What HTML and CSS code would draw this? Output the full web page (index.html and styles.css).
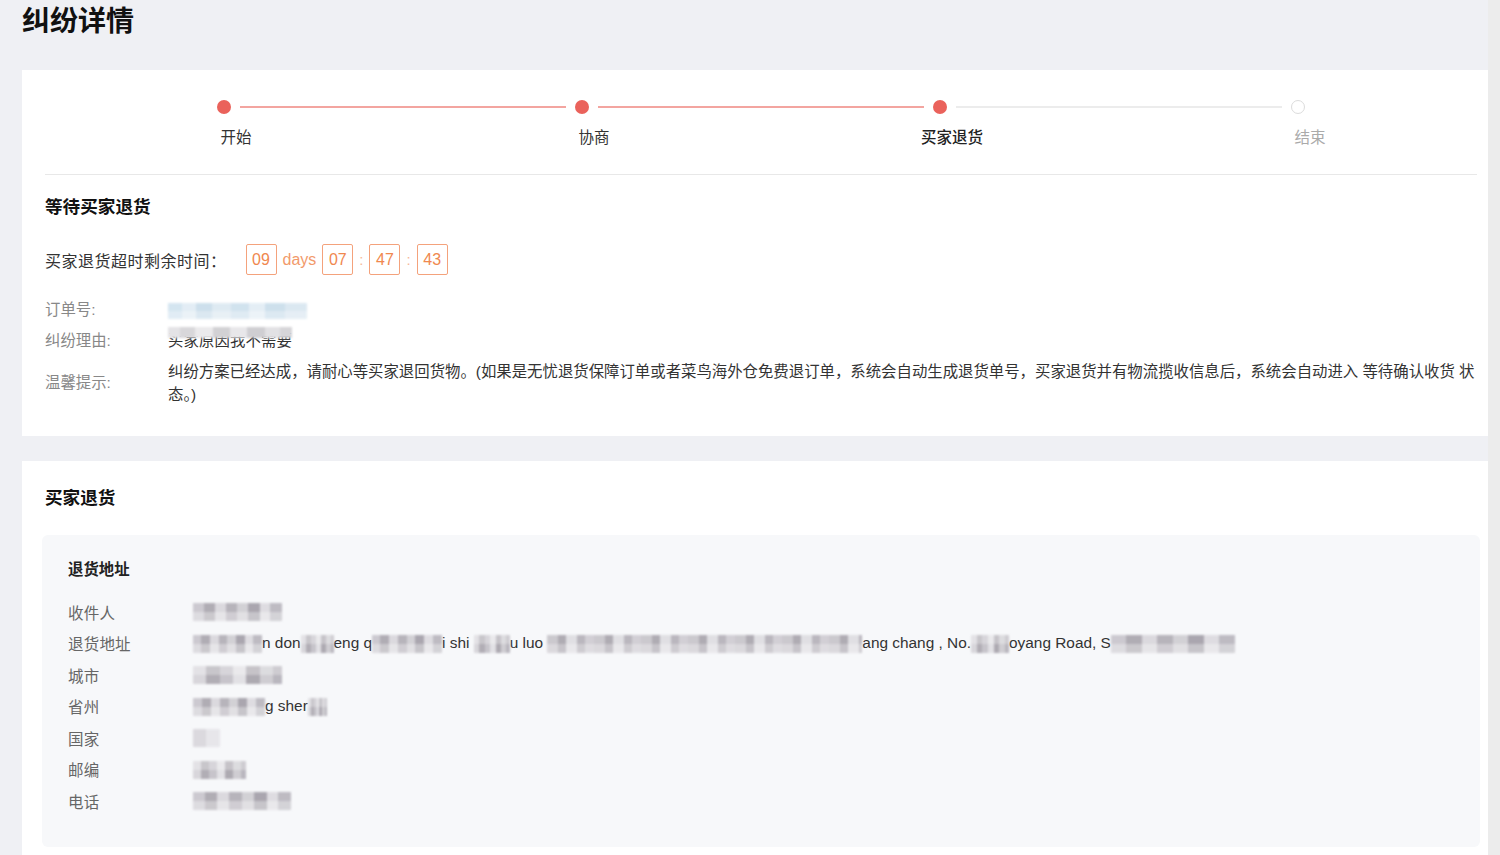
FILE: index.html
```html
<!DOCTYPE html>
<html lang="zh-CN">
<head>
    <meta charset="UTF-8">
    <meta name="viewport" content="width=device-width, initial-scale=1.0">
    <title>纠纷详情</title>
    <link rel="stylesheet" href="styles.css">
</head>
<body>

    <div class="page">
        <h1 class="page-title">纠纷详情</h1>

        <!-- progress + status -->
        <div class="card card-progress">
            <div class="steps-track">
                <span class="dot"></span><span class="line done"></span>
                <span class="dot"></span><span class="line done"></span>
                <span class="dot"></span><span class="line"></span>
                <span class="dot todo"></span>
            </div>
            <div class="steps-labels">
                <div class="step-label">开始</div>
                <div class="step-label">协商</div>
                <div class="step-label current">买家退货</div>
                <div class="step-label todo">结束</div>
            </div>
            <div class="divider"></div>

            <h2 class="section-title">等待买家退货</h2>
            <div class="countdown">
                <span class="countdown-label">买家退货超时剩余时间：</span>
                <span class="time-box">09</span>
                <span class="time-unit">days</span>
                <span class="time-box">07</span>
                <span class="time-sep">:</span>
                <span class="time-box">47</span>
                <span class="time-sep">:</span>
                <span class="time-box">43</span>
            </div>

            <div class="info-list">
                <div class="info-row">
                    <div class="info-label">订单号:</div>
                    <div class="info-value"><span class="mosaic blue" style="width:139px"></span></div>
                </div>
                <div class="info-row">
                    <div class="info-label">纠纷理由:</div>
                    <div class="info-value">
                        <span class="reason">买家原因我不需要<span class="mosaic cover" style="width:124px"></span></span>
                    </div>
                </div>
                <div class="info-row tip">
                    <div class="info-label">温馨提示:</div>
                    <div class="info-value">纠纷方案已经达成，请耐心等买家退回货物。(如果是无忧退货保障订单或者菜鸟海外仓免费退订单，系统会自动生成退货单号，买家退货并有物流揽收信息后，系统会自动进入 等待确认收货 状态。)</div>
                </div>
            </div>
        </div>

        <!-- return address -->
        <div class="card card-return">
            <h2 class="section-title">买家退货</h2>
            <div class="address-box">
                <h3 class="address-title">退货地址</h3>
                <div class="address-list">
                    <div class="address-row">
                        <span class="address-label">收件人</span>
                        <span class="address-value"><span class="mosaic" style="width:89px"></span></span>
                    </div>
                    <div class="address-row">
                        <span class="address-label">退货地址</span>
                        <span class="address-value"><span class="mosaic" style="width:69px"></span>n don<span class="mosaic alt" style="width:33px"></span>eng q<span class="mosaic" style="width:70px"></span>i shi <span class="mosaic alt" style="width:36px"></span>u luo <span class="mosaic wide" style="width:315px"></span>ang chang , No.<span class="mosaic alt" style="width:38px"></span>oyang Road, S<span class="mosaic" style="width:124px"></span></span>
                    </div>
                    <div class="address-row">
                        <span class="address-label">城市</span>
                        <span class="address-value"><span class="mosaic alt" style="width:89px"></span></span>
                    </div>
                    <div class="address-row">
                        <span class="address-label">省州</span>
                        <span class="address-value"><span class="mosaic" style="width:72px"></span>g sher<span class="mosaic alt" style="width:19px"></span></span>
                    </div>
                    <div class="address-row">
                        <span class="address-label">国家</span>
                        <span class="address-value"><span class="mosaic light" style="width:27px"></span></span>
                    </div>
                    <div class="address-row">
                        <span class="address-label">邮编</span>
                        <span class="address-value"><span class="mosaic alt" style="width:53px"></span></span>
                    </div>
                    <div class="address-row">
                        <span class="address-label">电话</span>
                        <span class="address-value"><span class="mosaic" style="width:98px"></span></span>
                    </div>
                </div>
            </div>
        </div>
    </div>

    <div class="scrollbar"></div>

</body>
</html>
```

FILE: styles.css
```css
body {
    margin: 0;
    font-family: "Liberation Sans", "Noto Sans CJK SC", sans-serif;
    background: #eff0f4;
    color: #333;
    overflow: hidden;
}

.page {
    padding-left: 22px;
}

.page-title {
    margin: 0;
    padding-top: 2px;
    font-size: 28px;
    line-height: 40px;
    font-weight: 700;
    color: #111;
}

.card {
    background-color: #fff;
    margin-top: 28px;
}

.card-progress {
    padding: 30px 23px 30px 23px;
}

/* Steps */
.steps-track {
    display: flex;
    align-items: center;
    padding: 0 172px;
    height: 14px;
}
.dot {
    flex: none;
    width: 14px;
    height: 14px;
    border-radius: 50%;
    background-color: #ea625b;
    box-sizing: border-box;
}
.dot.todo {
    background-color: #fff;
    border: 1.5px solid #dcdcdc;
}
.line {
    flex: 1;
    height: 2px;
    margin: 0 9px;
    background-color: #ececec;
}
.line.done {
    background-color: #f3a5a0;
}
.steps-labels {
    display: grid;
    grid-template-columns: repeat(4, 1fr);
    margin-top: 13px;
}
.step-label {
    padding-left: 24px;
    text-align: center;
    font-size: 15.5px;
    line-height: 22px;
    color: #333;
}
.step-label.current {
    color: #222;
    font-weight: 500;
}
.step-label.todo {
    color: #aaa;
}
.divider {
    height: 1px;
    background-color: #e8e8e8;
    margin-top: 25px;
}

.section-title {
    margin: 19px 0 0;
    font-size: 17.6px;
    line-height: 26px;
    font-weight: 700;
    color: #111;
}

/* Countdown */
.countdown {
    display: flex;
    align-items: center;
    height: 31px;
    margin-top: 24px;
}
.countdown-label {
    font-size: 16px;
    letter-spacing: 0.5px;
    margin-right: 19px;
    color: #333;
}
.time-box {
    width: 31px;
    height: 31px;
    box-sizing: border-box;
    border: 1px solid #f4a27c;
    border-radius: 2px;
    color: #f0884f;
    font-size: 16px;
    display: flex;
    align-items: center;
    justify-content: center;
}
.time-unit {
    margin: 0 6px;
    font-size: 16px;
    color: #f29a6b;
}
.time-sep {
    margin: 0 6px;
    font-size: 15px;
    color: #f6b99a;
}

/* Info rows */
.info-list {
    margin-top: 24px;
}
.info-row {
    display: flex;
    align-items: center;
    line-height: 22px;
    margin-top: 9px;
    font-size: 15.4px;
}
.info-row:first-child {
    margin-top: 0;
}
.info-row.tip {
    margin-top: 8px;
}
.info-label {
    flex: none;
    width: 123px;
    color: #888;
}
.info-value {
    flex: 1;
    color: #333;
}
.info-row.tip .info-value {
    line-height: 23px;
}
.reason {
    position: relative;
    display: inline-block;
    letter-spacing: 0.1px;
}
.reason .mosaic.cover {
    position: absolute;
    left: 0;
    top: -3px;
    height: 11px;
    opacity: 1;
    background: linear-gradient(90deg, #e4e3e6 0 10%, #d8d7da 10% 22%, #ebeaec 22% 36%, #d2d1d4 36% 50%, #e8e7ea 50% 64%, #cfced2 64% 78%, #e2e1e4 78% 90%, #d6d5d8 90%);
}

/* Pixelated private data */
.mosaic {
    display: inline-block;
    height: 18px;
    vertical-align: middle;
    background:
        linear-gradient(180deg, transparent 50%, rgba(255, 255, 255, 0.35) 50%),
        linear-gradient(90deg, #c8c5cc 0 12%, #a9a5ad 12% 25%, #d8d6db 25% 37%, #b1adb5 37% 50%, #cfcdd2 50% 62%, #a29ea7 62% 75%, #dcdadf 75% 87%, #b8b5bd 87%);
    filter: blur(0.8px);
    opacity: 0.9;
}
.mosaic.alt {
    background:
        linear-gradient(180deg, rgba(255, 255, 255, 0.3) 50%, transparent 50%),
        linear-gradient(90deg, #d5d3d8 0 15%, #aaa6ae 15% 30%, #c2bfc6 30% 45%, #e0dfe3 45% 60%, #a6a2aa 60% 75%, #cbc9ce 75% 90%, #b3b0b8 90%);
}
.mosaic.wide {
    background:
        linear-gradient(180deg, transparent 50%, rgba(255, 255, 255, 0.3) 50%),
        repeating-linear-gradient(90deg, #c7c4ca 0 11px, #a8a4ac 11px 19px, #dedde1 19px 30px, #b4b0b8 30px 38px, #cecbd1 38px 47px);
}
.mosaic.light {
    background: linear-gradient(90deg, #d8d6db 0 50%, #e6e5e9 50%);
}
.mosaic.blue {
    height: 16px;
    background:
        linear-gradient(180deg, transparent 50%, rgba(255, 255, 255, 0.3) 50%),
        linear-gradient(90deg, #d0e3ef 0 10%, #e0ecf4 10% 20%, #c8dcea 20% 32%, #dbe8f1 32% 45%, #cde0ed 45% 58%, #e2edf5 58% 70%, #c9ddeb 70% 84%, #d8e6f0 84%);
}

/* Return card */
.card-return {
    margin-top: 25px;
    padding: 24px 20px 30px 20px;
}
.card-return .section-title {
    margin: 0 0 0 3px;
}
.address-box {
    margin-top: 24px;
    background-color: #f7f8fa;
    border-radius: 6px;
    padding: 24px 26px 30px;
}
.address-title {
    margin: 0;
    font-size: 15.4px;
    line-height: 22px;
    font-weight: 700;
    color: #222;
}
.address-list {
    margin-top: 15px;
}
.address-row {
    display: flex;
    align-items: center;
    height: 31.5px;
}
.address-label {
    flex: none;
    width: 118px;
    font-size: 15.5px;
    letter-spacing: 0.2px;
    color: #666;
}
.address-value {
    padding-left: 7px;
    font-size: 15.4px;
    color: #333;
    white-space: nowrap;
}

.scrollbar {
    position: fixed;
    top: 0;
    right: 0;
    width: 12px;
    height: 100%;
    background-color: #ececec;
}
```
